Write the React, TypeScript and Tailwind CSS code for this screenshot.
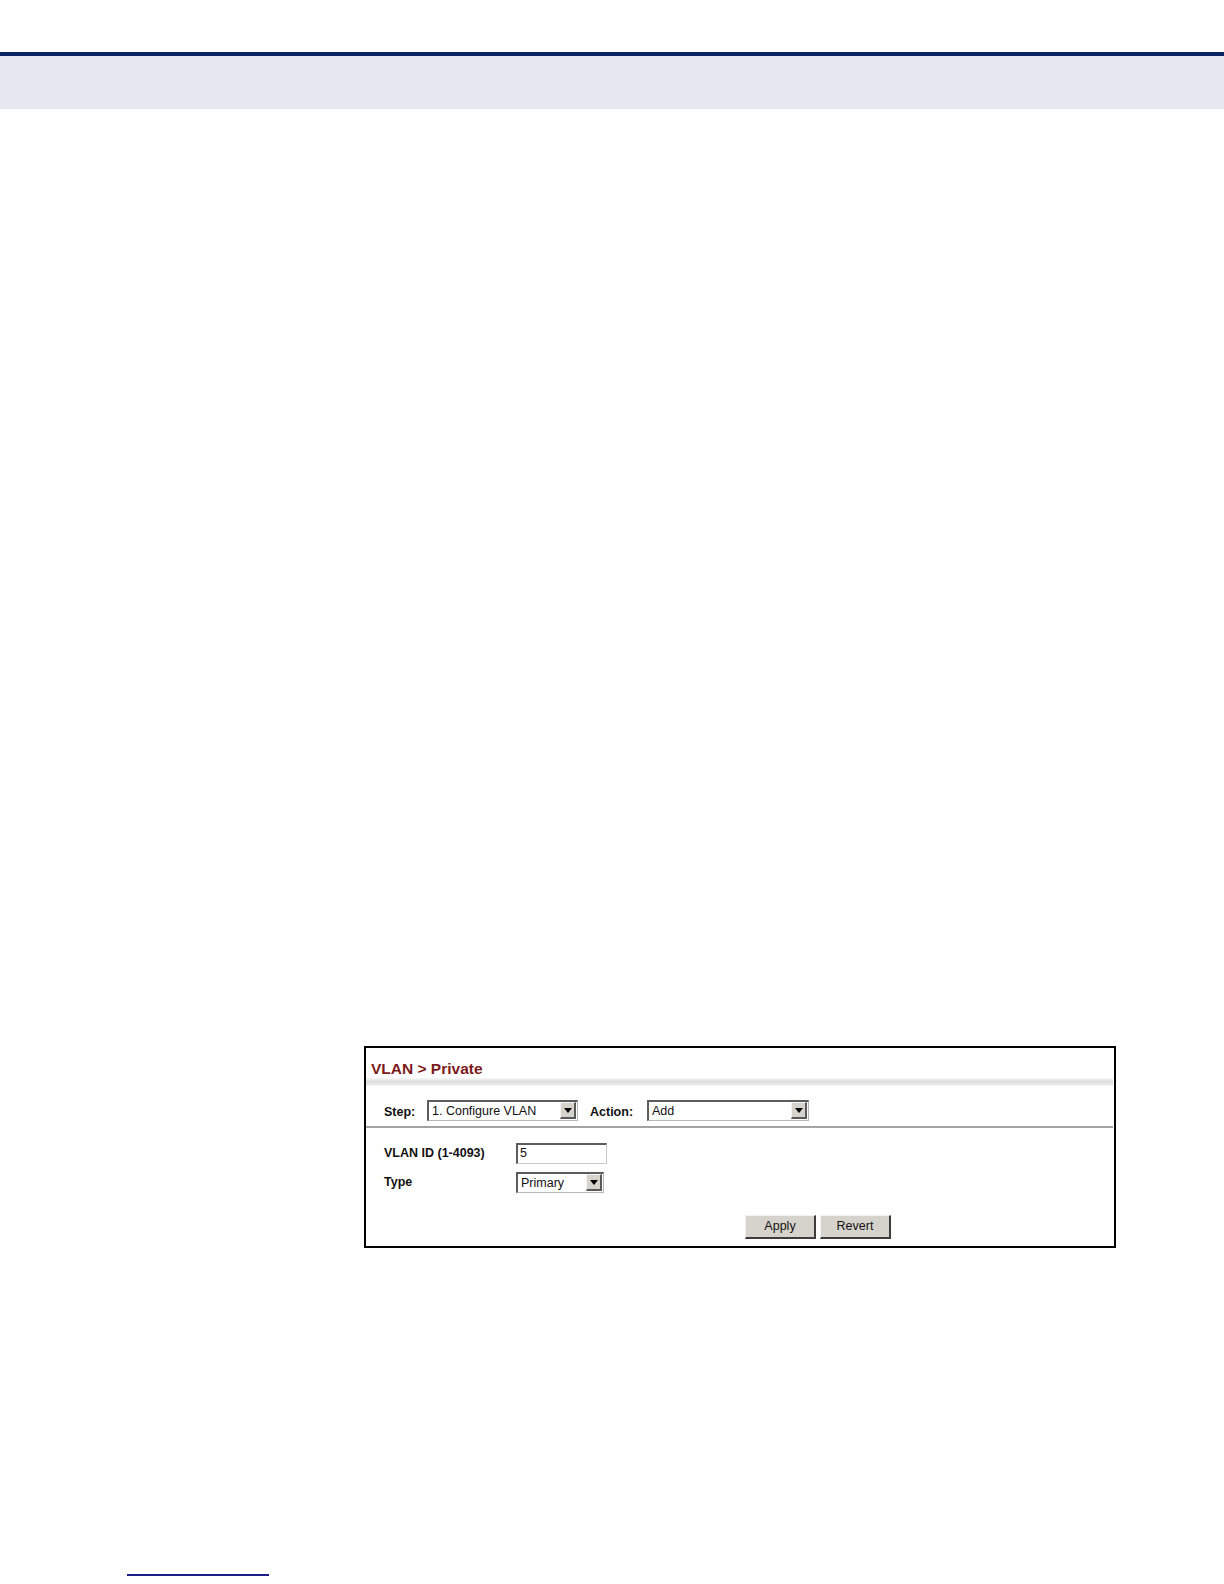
import React from "react";

const font = { fontFamily: '"Liberation Sans", Arial, sans-serif' };

function Arrow() {
  return (
    <div className="flex h-[17px] w-[16px] items-center justify-center border-t border-l border-t-[#f4f4f4] border-l-[#f4f4f4] border-b-2 border-r-2 border-b-[#5a5a5a] border-r-[#5a5a5a] bg-[#d6d3cc]">
      <svg width="8" height="5" viewBox="0 0 8 5">
        <path d="M0 0 H8 L4 5 Z" fill="#000" />
      </svg>
    </div>
  );
}

function Select({ value, width }: { value: string; width: string }) {
  return (
    <div
      className={`flex h-[21px] ${width} items-center justify-between border-t-2 border-l-2 border-t-[#5c5c5c] border-l-[#5c5c5c] border-b border-r border-b-[#b8b8b8] border-r-[#b8b8b8] bg-white pl-[3px] pr-[1px]`}
    >
      <span className="text-[12.5px] leading-none text-[#111]">{value}</span>
      <Arrow />
    </div>
  );
}

function Button({ label }: { label: string }) {
  return (
    <div className="flex h-[24px] w-[71px] items-center justify-center border-t border-l border-t-[#f2f2f2] border-l-[#f2f2f2] border-b-2 border-r-2 border-b-[#3c3c3c] border-r-[#3c3c3c] bg-[#d6d3cc] text-[12.5px] text-[#111]">
      {label}
    </div>
  );
}

export default function App() {
  return (
    <div className="relative flex h-[1584px] w-[1224px] flex-col bg-white" style={font}>
      <div className="h-[52px]" />
      <div className="h-[4px] w-full bg-[#0b2463]" />
      <div className="h-[53px] w-full bg-[#e5e8f0]" />

      <div className="ml-[364px] mt-[937px] flex h-[202px] w-[752px] flex-col border-2 border-black bg-white">
        <div className="pl-[5px] pt-[12px] text-[15.5px] font-bold leading-[18px] text-[#7b1a1a]">
          VLAN &gt; Private
        </div>
        <div className="mr-[1px] h-[8px] bg-gradient-to-b from-[#f7f7f7] via-[#dcdcdc] to-[#f5f5f5]" />

        <div className="mt-[13px] flex items-center pl-[18px]">
          <span className="mt-[4px] w-[43px] text-[12.5px] font-bold text-[#111]">Step:</span>
          <Select value="1. Configure VLAN" width="w-[151px]" />
          <span className="ml-[12px] mt-[4px] w-[57px] text-[12.5px] font-bold text-[#111]">Action:</span>
          <Select value="Add" width="w-[162px]" />
        </div>

        <div className="mr-[1px] mt-[4px] h-[2px] bg-[#a3a3a3]" />

        <div className="mt-[15px] flex items-center pl-[18px]">
          <span className="w-[132px] text-[12.5px] font-bold text-[#111]">VLAN ID (1-4093)</span>
          <div className="flex h-[21px] w-[91px] items-center border-t-2 border-l-2 border-t-[#5c5c5c] border-l-[#5c5c5c] border-b border-r border-b-[#c8c8c8] border-r-[#c8c8c8] bg-white pl-[2px] text-[12.5px] text-[#111]">
            5
          </div>
        </div>

        <div className="mt-[8px] flex items-center pl-[18px]">
          <span className="w-[132px] text-[12.5px] font-bold text-[#111]">Type</span>
          <Select value="Primary" width="w-[88px]" />
        </div>

        <div className="mt-[22px] flex gap-[4px] pl-[379px]">
          <Button label="Apply" />
          <Button label="Revert" />
        </div>
      </div>

      <div className="ml-[127px] mt-[326px] h-[2px] w-[142px] bg-[#1c1c8a]" />
    </div>
  );
}
